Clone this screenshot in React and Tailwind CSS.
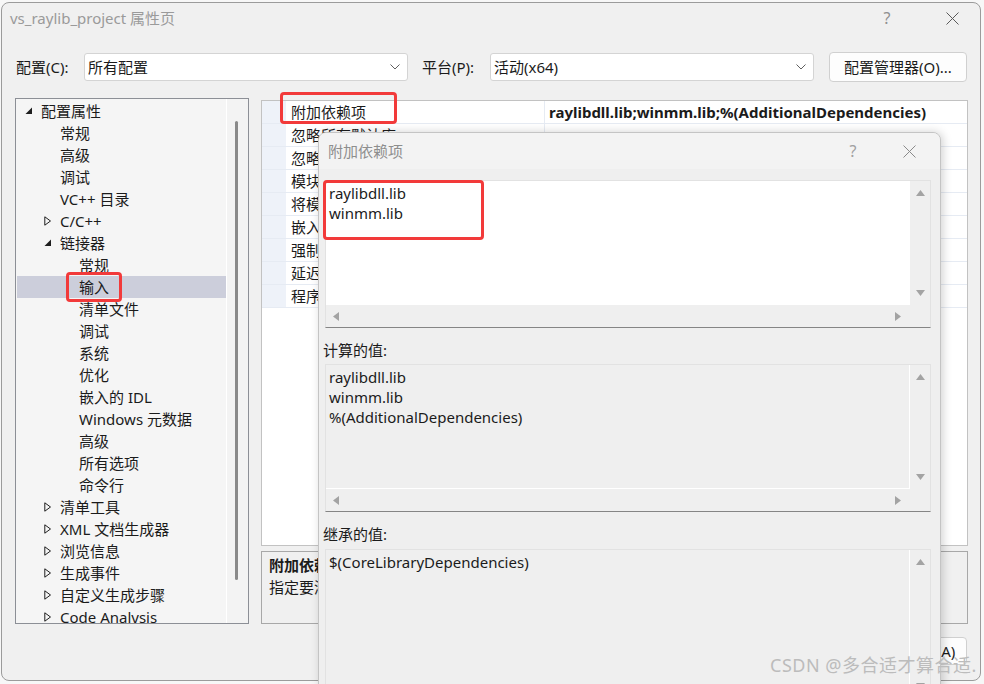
import React from 'react';

const tree = [
  { t: '配置属性', lvl: 0, exp: 'open' },
  { t: '常规', lvl: 1 },
  { t: '高级', lvl: 1 },
  { t: '调试', lvl: 1 },
  { t: 'VC++ 目录', lvl: 1 },
  { t: 'C/C++', lvl: 1, exp: 'closed' },
  { t: '链接器', lvl: 1, exp: 'open' },
  { t: '常规', lvl: 2 },
  { t: '输入', lvl: 2, sel: true },
  { t: '清单文件', lvl: 2 },
  { t: '调试', lvl: 2 },
  { t: '系统', lvl: 2 },
  { t: '优化', lvl: 2 },
  { t: '嵌入的 IDL', lvl: 2 },
  { t: 'Windows 元数据', lvl: 2 },
  { t: '高级', lvl: 2 },
  { t: '所有选项', lvl: 2 },
  { t: '命令行', lvl: 2 },
  { t: '清单工具', lvl: 1, exp: 'closed' },
  { t: 'XML 文档生成器', lvl: 1, exp: 'closed' },
  { t: '浏览信息', lvl: 1, exp: 'closed' },
  { t: '生成事件', lvl: 1, exp: 'closed' },
  { t: '自定义生成步骤', lvl: 1, exp: 'closed' },
  { t: 'Code Analysis', lvl: 1, exp: 'closed' },
];

const indent = ['pl-[8px]', 'pl-[27px]', 'pl-[46px]'];

const props = [
  ['附加依赖项', 'raylibdll.lib;winmm.lib;%(AdditionalDependencies)'],
  ['忽略所有默认库', ''],
  ['忽略特定默认库', ''],
  ['模块定义文件', ''],
  ['将模块添加到程序集', ''],
  ['嵌入托管资源文件', ''],
  ['强制符号引用', ''],
  ['延迟加载的 DLL', ''],
  ['程序集链接资源', ''],
];

function Chevron() {
  return (
    <svg width="10" height="6" viewBox="0 0 10 6" className="shrink-0">
      <path d="M0.5 0.5 L5 5 L9.5 0.5" fill="none" stroke="#5f5f5f" strokeWidth="1" />
    </svg>
  );
}

function CloseX({ size = 13, color = '#5a5a5a' }) {
  return (
    <svg width={size} height={size} viewBox="0 0 13 13">
      <path d="M0.5 0.5 L12.5 12.5 M12.5 0.5 L0.5 12.5" stroke={color} strokeWidth="1" />
    </svg>
  );
}

function TreeArrow({ exp }) {
  if (exp === 'open')
    return (
      <svg width="8" height="8" viewBox="0 0 8 8">
        <polygon points="7,0.5 7,7 0.5,7" fill="#1e1e1e" />
      </svg>
    );
  if (exp === 'closed')
    return (
      <svg width="8" height="10" viewBox="0 0 8 10">
        <polygon points="0.8,0.8 6.5,5 0.8,9.2" fill="none" stroke="#1e1e1e" strokeWidth="1" />
      </svg>
    );
  return null;
}

function Tri({ dir }) {
  const pts = {
    up: '0,6 4.5,0 9,6',
    down: '0,0 9,0 4.5,6',
    left: '6,0 6,9 0,4.5',
    right: '0,0 6,4.5 0,9',
  }[dir];
  const w = dir === 'up' || dir === 'down' ? 9 : 6;
  const h = dir === 'up' || dir === 'down' ? 6 : 9;
  return (
    <svg width={w} height={h} viewBox={`0 0 ${w} ${h}`}>
      <polygon points={pts} fill="#a3a3a3" />
    </svg>
  );
}

function EditBox({ lines, white, tall }) {
  return (
    <div className={`ml-[6px] w-[606px] ${tall ? 'h-[172px]' : 'h-[148px]'} border border-[#e2e2e2] border-b-[#858585] grid grid-cols-[1fr_20px] grid-rows-[1fr_22px] shrink-0`}>
      <div className={`pl-[3px] pt-[2px] text-[15px] leading-[20px] text-[#1b1b1b] ${white ? 'bg-white' : 'bg-[#efefef] border-r border-b border-white'}`}>
        {lines.map((l, i) => (
          <div key={i}>{l}</div>
        ))}
      </div>
      <div className="bg-[#efefef] flex flex-col items-center justify-between pt-[9px] pb-[9px]">
        <Tri dir="up" />
        <Tri dir="down" />
      </div>
      <div className="bg-[#efefef] flex items-center justify-between pl-[7px] pr-[9px]">
        <Tri dir="left" />
        <Tri dir="right" />
      </div>
      <div className="bg-[#efefef]" />
    </div>
  );
}

export default function App() {
  return (
    <div className="relative w-[984px] h-[684px] overflow-hidden bg-[#f7f7f7] font-['Noto_Sans','Noto_Sans_CJK_SC',sans-serif] text-[#1b1b1b]">
      {/* main window */}
      <div className="ml-[1px] mt-[2px] w-[980px] h-[679px] rounded-[8px] border border-[#9b9b9b] bg-[#f0f0f0] flex flex-col">
        {/* title bar */}
        <div className="h-[30px] flex items-center pl-[8px] shrink-0">
          <span className="text-[15px] text-[#9a9a9a]">vs_raylib_project 属性页</span>
          <span className="ml-auto text-[16px] text-[#8f8f8f] w-[14px] text-center mr-[52px]">?</span>
          <span className="mr-[21px]"><CloseX /></span>
        </div>

        {/* config row */}
        <div className="mt-[19px] h-[30px] flex items-center pl-[14px] text-[15px] shrink-0">
          <span className="w-[68px]">配置(C):</span>
          <div className="w-[324px] h-[28px] bg-white border border-[#d4d4d4] rounded-[3px] flex items-center pl-[3px] pr-[7px]">
            <span className="flex-1">所有配置</span>
            <Chevron />
          </div>
          <span className="ml-[14px] w-[68px]">平台(P):</span>
          <div className="w-[324px] h-[28px] bg-white border border-[#d4d4d4] rounded-[3px] flex items-center pl-[3px] pr-[7px]">
            <span className="flex-1">活动(x64)</span>
            <Chevron />
          </div>
          <div className="ml-[15px] w-[138px] h-[30px] bg-[#fdfdfd] border border-[#d0d0d0] rounded-[4px] flex items-center justify-center">
            配置管理器(O)...
          </div>
        </div>

        {/* panels */}
        <div className="mt-[16px] flex shrink-0">
          {/* tree */}
          <div className="ml-[13px] w-[234px] h-[526px] border border-[#8c8f96] bg-[#f5f5f5] flex overflow-hidden">
            <div className="flex-1 pt-[1px] pl-[1px] text-[15px]">
              {tree.map((n, i) => (
                <div
                  key={i}
                  className={`h-[22px] flex items-center ${indent[n.lvl]} ${n.sel ? 'bg-[#cccedb]' : ''}`}
                >
                  <span className="w-[16px] flex items-center">
                    <TreeArrow exp={n.exp} />
                  </span>
                  <span className="whitespace-nowrap">{n.t}</span>
                </div>
              ))}
            </div>
            <div className="w-[22px] border-l border-white bg-[#f3f3f3] pl-[8px] pt-[22px]">
              <div className="w-[3px] h-[459px] rounded-full bg-[#8a8a8a]" />
            </div>
          </div>

          {/* right column */}
          <div className="ml-[12px] w-[707px] pt-[2px] flex flex-col">
            <div className="h-[446px] border border-[#c2c2c2] bg-white text-[15px]">
              {props.map(([k, v], i) => (
                <div key={i} className="h-[23px] flex border-b border-[#e6ebf3]">
                  <div className="w-[24px] bg-[#eef2f9]" />
                  <div className="w-[259px] pl-[5px] flex items-center border-r border-[#e6ebf3] whitespace-nowrap overflow-hidden">
                    {k}
                  </div>
                  <div className="flex-1 pl-[4px] flex items-center font-bold whitespace-nowrap">{v}</div>
                </div>
              ))}
            </div>
            <div className="mt-[5px] h-[73px] border border-[#a8a8a8] bg-[#f0f0f0] px-[7px] pt-[2px] text-[15px] leading-[22px]">
              <div className="font-bold">附加依赖项</div>
              <div>指定要添加到链接命令行的附加项。[例如 kernel32.lib]</div>
            </div>
          </div>
        </div>

        {/* bottom buttons */}
        <div className="mt-[13px] flex justify-end gap-[8px] pr-[13px] text-[15px]">
          <div className="w-[72px] h-[28px] bg-[#fdfdfd] border border-[#d0d0d0] rounded-[4px] flex items-center justify-center">确定</div>
          <div className="w-[72px] h-[28px] bg-[#fdfdfd] border border-[#d0d0d0] rounded-[4px] flex items-center justify-center">取消</div>
          <div className="w-[72px] h-[28px] bg-[#fdfdfd] border border-[#d0d0d0] rounded-[4px] flex items-center justify-center">应用(A)</div>
        </div>
      </div>

      {/* dialog overlay */}
      <div className="absolute left-[318px] top-[132px] w-[623px] h-[580px] rounded-t-[8px] border border-[#c4c4c4] bg-[#efefef] shadow-[2px_0_10px_rgba(0,0,0,0.18)] flex flex-col overflow-hidden text-[15px]">
        <div className="h-[36px] bg-[#f3f3f3] flex items-center pl-[9px] shrink-0">
          <span className="text-[#8e8e8e]">附加依赖项</span>
          <span className="ml-auto text-[16px] text-[#a0a0a0] w-[12px] text-center mr-[44px]">?</span>
          <span className="mr-[24px]"><CloseX size={13} color="#8a8a8a" /></span>
        </div>
        <div className="pt-[11px] flex flex-col">
          <EditBox white lines={['raylibdll.lib', 'winmm.lib']} />
          <div className="h-[36px] pt-[12px] pl-[4px] leading-[20px] shrink-0">计算的值:</div>
          <EditBox lines={['raylibdll.lib', 'winmm.lib', '%(AdditionalDependencies)']} />
          <div className="h-[37px] pt-[12px] pl-[4px] leading-[20px] shrink-0">继承的值:</div>
          <EditBox tall lines={['$(CoreLibraryDependencies)']} />
        </div>
      </div>

      {/* red annotation boxes */}
      <div className="absolute left-[280px] top-[92px] w-[117px] h-[32px] rounded-[4px] border-[3px] border-[#f23a3a]" />
      <div className="absolute left-[66px] top-[272px] w-[56px] h-[30px] rounded-[4px] border-[3px] border-[#f23a3a]" />
      <div className="absolute left-[323px] top-[180px] w-[161px] h-[60px] rounded-[4px] border-[3px] border-[#f23a3a]" />

      {/* watermark */}
      <div className="absolute left-[770px] top-[652px] text-[18px] tracking-[0.5px] text-[#bcbcbc] whitespace-nowrap">CSDN @多合适才算合适.</div>
    </div>
  );
}
